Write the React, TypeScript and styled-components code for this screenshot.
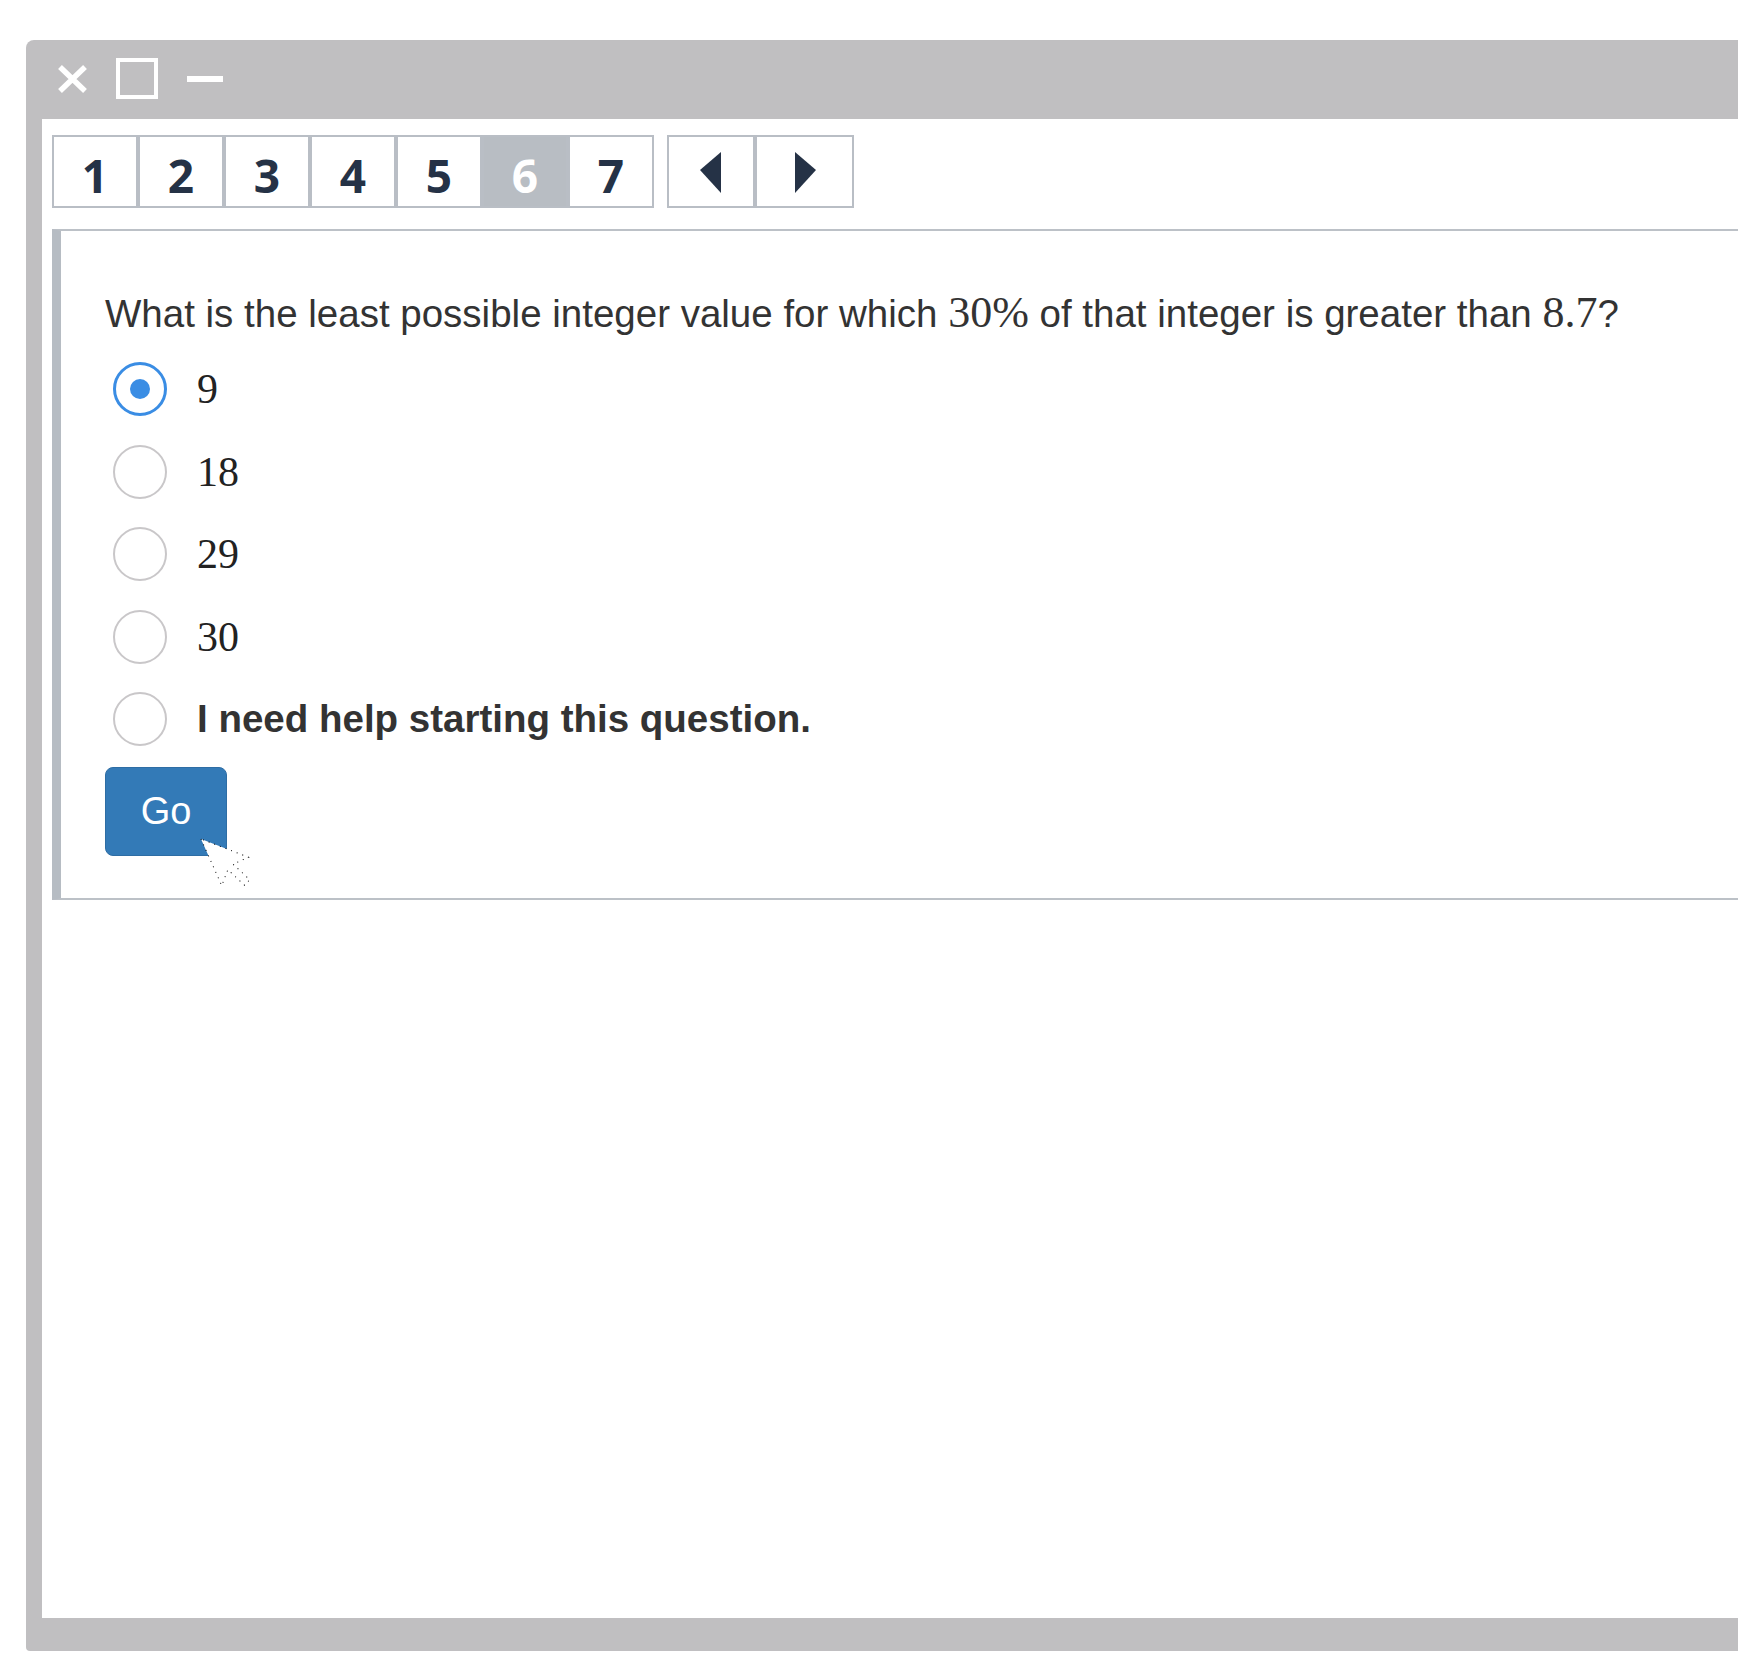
import React from "react";
import styled, { createGlobalStyle } from "styled-components";

const GlobalStyle = createGlobalStyle`
  html, body {
    margin: 0;
    padding: 0;
    background: #ffffff;
    overflow: hidden;
  }
  body {
    font-family: "Liberation Sans", Arial, sans-serif;
    color: #333333;
  }
`;

const Page = styled.div`
  width: 1738px;
  height: 1680px;
  padding: 40px 0 0 26px;
  box-sizing: border-box;
  overflow: hidden;
`;

const Window = styled.div`
  width: 1740px;
  height: 1611px;
  background: #c0bfc1;
  border-radius: 8px 0 0 4px;
  display: flex;
  flex-direction: column;
`;

const TitleBar = styled.div`
  height: 79px;
  flex: none;
  display: flex;
  align-items: center;
  gap: 28px;
  padding: 0 0 2px 31px;
  box-sizing: border-box;
`;

const SquareIcon = styled.div`
  width: 42px;
  height: 41px;
  box-sizing: border-box;
  border: 4.5px solid #ffffff;
`;

const MinusIcon = styled.div`
  width: 36px;
  height: 6px;
  background: #ffffff;
  margin-left: 1px;
`;

const Body = styled.div`
  flex: 1;
  background: #ffffff;
  margin: 0 0 33px 16px;
  padding: 16px 0 0 10px;
  display: flex;
  flex-direction: column;
`;

const TabBar = styled.div`
  display: flex;
  gap: 13px;
`;

const TabGroup = styled.div`
  display: flex;
`;

const Tab = styled.div<{ $active?: boolean; $w?: number }>`
  width: ${(p) => p.$w ?? 86}px;
  height: 73px;
  box-sizing: border-box;
  border: 2px solid #b9bec5;
  background: ${(p) => (p.$active ? "#b8bdc3" : "#ffffff")};
  color: ${(p) => (p.$active ? "#ffffff" : "#253246")};
  display: flex;
  align-items: center;
  justify-content: center;
  padding-top: 6px;
  font-family: "Open Sans", "Noto Sans", sans-serif;
  font-weight: 700;
  font-size: 46px;
  line-height: 1;
`;

const ArrowTab = styled(Tab)`
  padding-top: 2px;
`;

const Panel = styled.div`
  margin-top: 21px;
  border-left: 9px solid #b6bcc3;
  border-top: 2px solid #bcc1c7;
  border-bottom: 2px solid #bcc1c7;
  padding: 61px 0 42px 44px;
`;

const Question = styled.div`
  font-size: 38.5px;
  line-height: 44px;
  color: #333333;
  white-space: nowrap;
`;

const MathText = styled.span`
  font-family: "Liberation Serif", "Times New Roman", serif;
  font-size: 44px;
  line-height: 0;
`;

const Options = styled.div`
  margin-top: 12px;
  display: flex;
  flex-direction: column;
`;

const OptionRow = styled.label`
  height: 82.5px;
  display: flex;
  align-items: center;
  gap: 30px;
  padding-left: 8px;
`;

const Radio = styled.span<{ $checked?: boolean }>`
  width: 54px;
  height: 54px;
  flex: none;
  box-sizing: border-box;
  border-radius: 50%;
  border: ${(p) => (p.$checked ? "3px solid #3a8de4" : "2.5px solid #c9c7c9")};
  display: flex;
  align-items: center;
  justify-content: center;
  &::after {
    content: "";
    width: 20px;
    height: 20px;
    border-radius: 50%;
    background: #3a8de4;
    display: ${(p) => (p.$checked ? "block" : "none")};
  }
`;

const OptionMath = styled.span`
  font-family: "Liberation Serif", "Times New Roman", serif;
  font-size: 42px;
  color: #222222;
`;

const OptionText = styled.span`
  font-size: 38.5px;
  font-weight: 700;
  color: #333333;
`;

const GoWrap = styled.div`
  position: relative;
  margin-top: 6px;
  width: 122px;
`;

const GoButton = styled.button`
  width: 122px;
  height: 89px;
  box-sizing: border-box;
  border: 1px solid #2e6da4;
  border-radius: 8px;
  background: #337ab7;
  color: #ffffff;
  font-family: "Liberation Sans", Arial, sans-serif;
  font-size: 38px;
  padding: 0;
  display: flex;
  align-items: center;
  justify-content: center;
`;

const Cursor = styled.svg`
  position: absolute;
  left: 96px;
  top: 72px;
  overflow: visible;
  transform-origin: 0 0;
  transform: rotate(-24deg);
  pointer-events: none;
`;

const tabs = ["1", "2", "3", "4", "5", "6", "7"];
const options = ["9", "18", "29", "30"];

export default function App() {
  return (
    <>
      <GlobalStyle />
      <Page>
        <Window>
          <TitleBar>
            <svg width="31" height="30" viewBox="0 0 31 30">
              <path d="M3 3 L28 27 M28 3 L3 27" stroke="#ffffff" strokeWidth="5.5" strokeLinecap="butt" />
            </svg>
            <SquareIcon />
            <MinusIcon />
          </TitleBar>
          <Body>
            <TabBar>
              <TabGroup>
                {tabs.map((t) => (
                  <Tab key={t} $active={t === "6"}>
                    {t}
                  </Tab>
                ))}
              </TabGroup>
              <TabGroup>
                <ArrowTab $w={88}>
                  <svg width="22" height="41" viewBox="0 0 22 41">
                    <polygon points="21,0 21,41 0,18" fill="#253246" />
                  </svg>
                </ArrowTab>
                <ArrowTab $w={99}>
                  <svg width="22" height="41" viewBox="0 0 22 41">
                    <polygon points="1,0 1,41 22,18" fill="#253246" />
                  </svg>
                </ArrowTab>
              </TabGroup>
            </TabBar>
            <Panel>
              <Question>
                What is the least possible integer value for which <MathText>30%</MathText> of that
                integer is greater than <MathText>8.7</MathText>?
              </Question>
              <Options>
                {options.map((o, i) => (
                  <OptionRow key={o}>
                    <Radio $checked={i === 0} />
                    <OptionMath>{o}</OptionMath>
                  </OptionRow>
                ))}
                <OptionRow>
                  <Radio />
                  <OptionText>I need help starting this question.</OptionText>
                </OptionRow>
              </Options>
              <GoWrap>
                <GoButton>Go</GoButton>
                <Cursor width="38" height="62" viewBox="0 0 38 62">
                  <polygon
                    points="0,0 0,51 12,39 21,60 28,57 19,36 36,36"
                    fill="#ffffff"
                    stroke="#000000"
                    strokeWidth="1"
                    strokeDasharray="1 5"
                  />
                </Cursor>
              </GoWrap>
            </Panel>
          </Body>
        </Window>
      </Page>
    </>
  );
}
